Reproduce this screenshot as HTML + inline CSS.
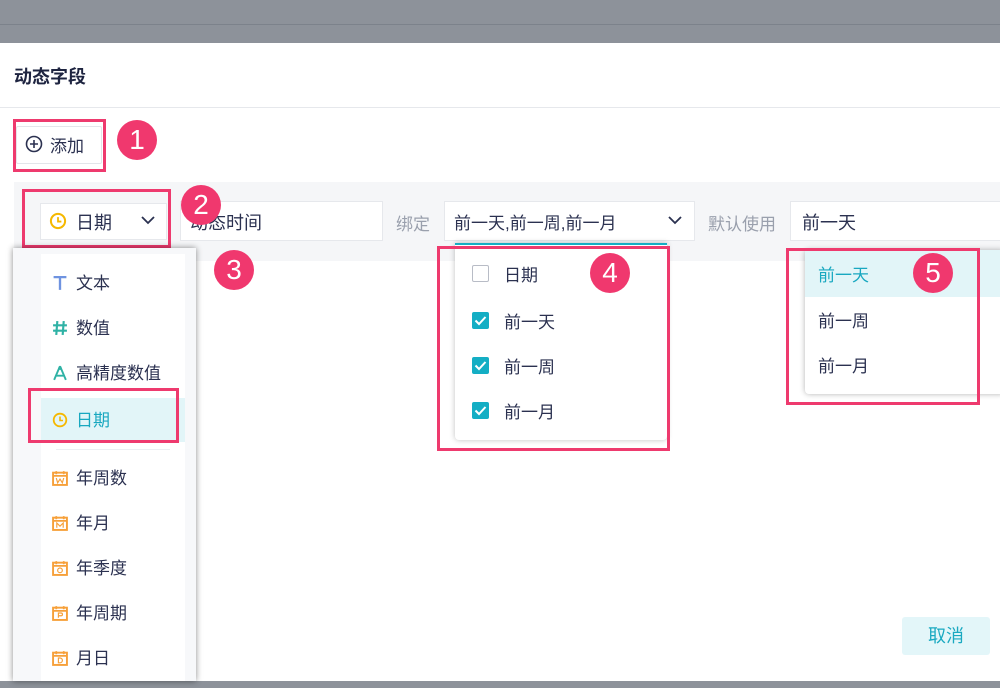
<!DOCTYPE html><html><head><meta charset="utf-8"><style>
*{margin:0;padding:0;box-sizing:border-box}
body{width:1000px;height:688px;overflow:hidden;position:relative;background:#fff;font-family:"Liberation Sans","Noto Sans CJK SC",sans-serif;color:#2b3150;font-size:16px}
.a{position:absolute}
.red{position:absolute;border:3px solid #ee3a6e}
.badge{position:absolute;width:40px;height:40px;border-radius:50%;background:#f0386e;color:#fff;font-size:28px;line-height:40px;text-align:center;font-family:"Liberation Sans",sans-serif}
.item{position:absolute;left:0;right:0;height:45px;line-height:45px;padding-left:35px;font-size:17px}
.ic{position:absolute;left:11px;top:14px;width:16px;height:16px}
</style></head><body>
<div class="a" style="left:0;top:0;width:1000px;height:43px;background:#8d929a"></div>
<div class="a" style="left:0;top:24px;width:1000px;height:1px;background:#7c828b"></div>
<div class="a" style="left:0;top:681px;width:1000px;height:7px;background:#8d929a"></div>
<div class="a" style="left:14px;top:63px;font-size:18px;font-weight:bold;color:#1e2440">动态字段</div>
<div class="a" style="left:0;top:107px;width:1000px;height:1px;background:#e6e8ec"></div>
<div class="a" style="left:16px;top:126px;width:86px;height:38px;border:1px solid #e3e5ea;border-radius:2px"></div>
<svg class="a" style="left:25px;top:135px" width="18" height="18" viewBox="0 0 18 18"><circle cx="9" cy="9" r="7.5" fill="none" stroke="#2b3150" stroke-width="1.6"/><path d="M9 5v8M5 9h8" stroke="#2b3150" stroke-width="1.6"/></svg>
<div class="a" style="left:50px;top:132px;font-size:17px">添加</div>
<div class="red" style="left:13px;top:119px;width:93px;height:53px"></div>
<div class="badge" style="left:117px;top:120px">1</div>

<div class="a" style="left:14px;top:182px;width:986px;height:79px;background:#f5f6f8"></div>
<div class="a" style="left:40px;top:203px;width:127px;height:37px;background:#fff;border:1px solid #e6e8ec"></div>
<svg class="a" style="left:49px;top:212px" width="18" height="18" viewBox="0 0 16 16"><circle cx="8" cy="8" r="6.3" fill="none" stroke="#f5b800" stroke-width="1.8"/><path d="M8 4.5V8.5H11" fill="none" stroke="#f5b800" stroke-width="1.6"/></svg>
<div class="a" style="left:76px;top:209px;font-size:18px">日期</div>
<svg class="a" style="left:141px;top:215px" width="14" height="10" viewBox="0 0 14 10"><path d="M1 2l6 6 6-6" fill="none" stroke="#2b3150" stroke-width="1.8"/></svg>
<div class="red" style="left:22px;top:189px;width:149px;height:59px"></div>
<div class="a" style="left:180px;top:201px;width:203px;height:40px;background:#fff;border:1px solid #e6e8ec"></div>
<div class="a" style="left:190px;top:209px;font-size:18px">动态时间</div>
<div class="badge" style="left:181px;top:185px">2</div>
<div class="a" style="left:396px;top:210px;font-size:17px;color:#9aa0ad">绑定</div>
<div class="a" style="left:444px;top:201px;width:251px;height:40px;background:#fff;border:1px solid #e6e8ec"></div>
<div class="a" style="left:454px;top:209px;font-size:17px">前一天,前一周,前一月</div>
<svg class="a" style="left:668px;top:215px" width="14" height="10" viewBox="0 0 14 10"><path d="M1 2l6 6 6-6" fill="none" stroke="#2b3150" stroke-width="1.8"/></svg>
<div class="a" style="left:708px;top:210px;font-size:17px;color:#9aa0ad">默认使用</div>
<div class="a" style="left:790px;top:201px;width:215px;height:40px;background:#fff;border:1px solid #e6e8ec"></div>
<div class="a" style="left:802px;top:209px;font-size:18px">前一天</div>

<!-- dropdown 1 -->
<div class="a" style="left:13px;top:248px;width:183px;height:433px;background:#f7f8fa;box-shadow:0 0 6px rgba(0,0,0,.45)"></div>
<div class="a" style="left:41px;top:254px;width:144px;height:427px;background:#fff">
 <div class="item" style="top:7px"><svg class="ic" viewBox="0 0 15 15"><path d="M1.5 2H13.5M7.5 2V14" stroke="#6f93e0" stroke-width="2.2" fill="none"/></svg>文本</div>
 <div class="item" style="top:52px"><svg class="ic" viewBox="0 0 15 15"><path d="M5 1L4 14M11 1L10 14M1 5H14M1 10H14" stroke="#2fb2a5" stroke-width="2" fill="none"/></svg>数值</div>
 <div class="item" style="top:97px"><svg class="ic" viewBox="0 0 15 15"><path d="M7.5 1L2 14M7.5 1L13 14M3.5 10H11.5" stroke="#2fb2a5" stroke-width="1.8" fill="none"/><circle cx="7.5" cy="3" r="1.6" fill="#2fb2a5"/></svg>高精度数值</div>
 <div class="item" style="top:144px;height:44px;background:#e2f5f8;color:#19a8c0"><svg class="ic" viewBox="0 0 16 16"><circle cx="8" cy="8" r="6.3" fill="none" stroke="#f5b800" stroke-width="1.8"/><path d="M8 4.5V8.5H11" fill="none" stroke="#f5b800" stroke-width="1.6"/></svg>日期</div>
 <div class="a" style="left:15px;top:195px;width:114px;height:1px;background:#eceef2"></div>
 <div class="item" style="top:202px"><svg class="ic" viewBox="0 0 15 15"><rect x="1" y="2.5" width="13" height="11.5" fill="none" stroke="#f6a03a" stroke-width="1.8"/><path d="M4 1v3M11 1v3M1 5.5H14" stroke="#f6a03a" stroke-width="1.6"/><path d="M4 7.5l1.3 4.5 2.2-3.5 2.2 3.5 1.3-4.5" stroke="#f6a03a" stroke-width="1.1" fill="none"/></svg>年周数</div>
 <div class="item" style="top:247px"><svg class="ic" viewBox="0 0 15 15"><rect x="1" y="2.5" width="13" height="11.5" fill="none" stroke="#f6a03a" stroke-width="1.8"/><path d="M4 1v3M11 1v3M1 5.5H14" stroke="#f6a03a" stroke-width="1.6"/><path d="M4.5 12V7.5l3 3 3-3V12" stroke="#f6a03a" stroke-width="1.1" fill="none"/></svg>年月</div>
 <div class="item" style="top:292px"><svg class="ic" viewBox="0 0 15 15"><rect x="1" y="2.5" width="13" height="11.5" fill="none" stroke="#f6a03a" stroke-width="1.8"/><path d="M4 1v3M11 1v3M1 5.5H14" stroke="#f6a03a" stroke-width="1.6"/><circle cx="7.5" cy="9.7" r="2.2" stroke="#f6a03a" stroke-width="1.1" fill="none"/></svg>年季度</div>
 <div class="item" style="top:337px"><svg class="ic" viewBox="0 0 15 15"><rect x="1" y="2.5" width="13" height="11.5" fill="none" stroke="#f6a03a" stroke-width="1.8"/><path d="M4 1v3M11 1v3M1 5.5H14" stroke="#f6a03a" stroke-width="1.6"/><path d="M6 12V7.5h2.5a1.3 1.3 0 010 2.6H6" stroke="#f6a03a" stroke-width="1.1" fill="none"/></svg>年周期</div>
 <div class="item" style="top:382px"><svg class="ic" viewBox="0 0 15 15"><rect x="1" y="2.5" width="13" height="11.5" fill="none" stroke="#f6a03a" stroke-width="1.8"/><path d="M4 1v3M11 1v3M1 5.5H14" stroke="#f6a03a" stroke-width="1.6"/><path d="M6 7.5V12h1.5a2.2 2.2 0 000-4.5z" stroke="#f6a03a" stroke-width="1.1" fill="none"/></svg>月日</div>
</div>
<div class="red" style="left:28px;top:388px;width:151px;height:55px"></div>
<div class="badge" style="left:214px;top:250px">3</div>

<!-- dropdown 4 -->
<div class="a" style="left:455px;top:243px;width:212px;height:197px;background:#fff;box-shadow:0 0 6px rgba(0,0,0,.25);border-top:2px solid #14aec4;border-radius:0 0 4px 4px"></div>
<div class="a" style="left:472px;top:265px;width:17px;height:17px;border:1px solid #b8bcc6;border-radius:2px;background:#fff"></div>
<div class="a" style="left:504px;top:261px;font-size:17px">日期</div>
<svg class="a" style="left:472px;top:312px" width="17" height="17"><rect width="17" height="17" rx="2" fill="#14aec4"/><path d="M3.5 8.5l3.5 3.5 6.5-7" stroke="#fff" stroke-width="2" fill="none"/></svg>
<div class="a" style="left:504px;top:308px;font-size:17px">前一天</div>
<svg class="a" style="left:472px;top:357px" width="17" height="17"><rect width="17" height="17" rx="2" fill="#14aec4"/><path d="M3.5 8.5l3.5 3.5 6.5-7" stroke="#fff" stroke-width="2" fill="none"/></svg>
<div class="a" style="left:504px;top:353px;font-size:17px">前一周</div>
<svg class="a" style="left:472px;top:402px" width="17" height="17"><rect width="17" height="17" rx="2" fill="#14aec4"/><path d="M3.5 8.5l3.5 3.5 6.5-7" stroke="#fff" stroke-width="2" fill="none"/></svg>
<div class="a" style="left:504px;top:398px;font-size:17px">前一月</div>
<div class="red" style="left:437px;top:246px;width:233px;height:205px"></div>
<div class="badge" style="left:590px;top:253px">4</div>

<!-- dropdown 5 -->
<div class="a" style="left:805px;top:250px;width:200px;height:144px;background:#fff;box-shadow:0 0 6px rgba(0,0,0,.3);border-radius:4px"></div>
<div class="a" style="left:805px;top:250px;width:200px;height:47px;background:#e2f5f8"></div>
<div class="a" style="left:818px;top:261px;font-size:17px;color:#19a8c0">前一天</div>
<div class="a" style="left:818px;top:307px;font-size:17px">前一周</div>
<div class="a" style="left:818px;top:352px;font-size:17px">前一月</div>
<div class="red" style="left:786px;top:248px;width:194px;height:157px"></div>
<div class="badge" style="left:913px;top:253px">5</div>

<div class="a" style="left:902px;top:617px;width:88px;height:38px;background:#e3f6f9;border-radius:3px;color:#1aa9c1;font-size:18px;text-align:center;line-height:38px">取消</div>
</body></html>
